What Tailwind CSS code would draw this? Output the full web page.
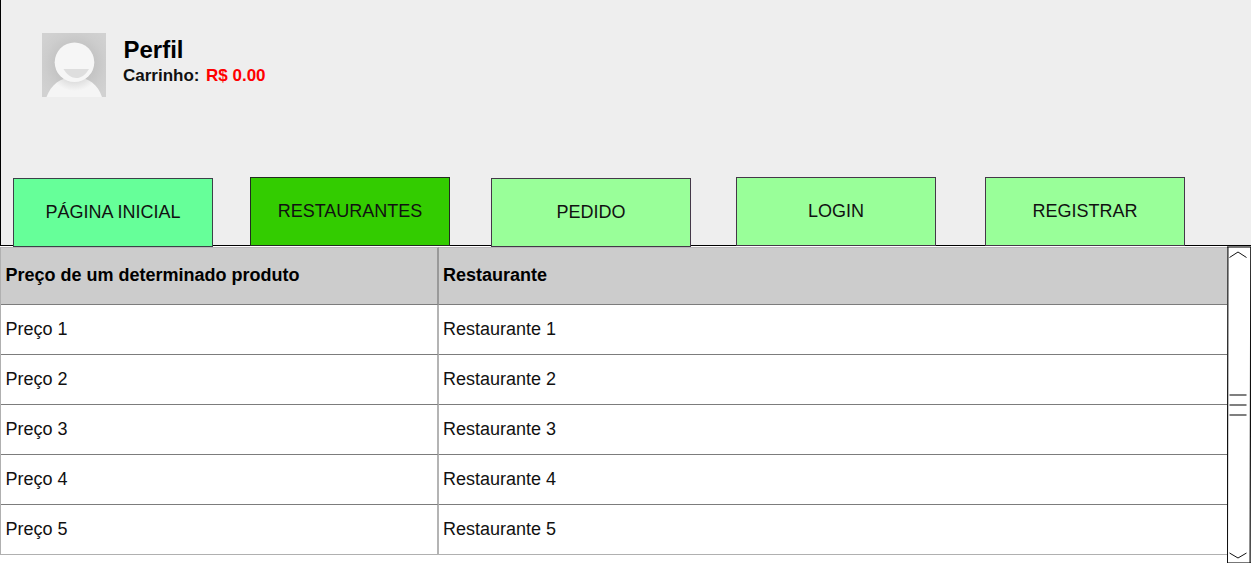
<!DOCTYPE html>
<html lang="pt-BR">
<head>
<meta charset="utf-8">
<title>Restaurantes</title>
<script src="https://cdn.jsdelivr.net/npm/@tailwindcss/browser@4"></script>
</head>
<body class="h-[563px] w-[1251px] overflow-hidden bg-white font-['Liberation_Sans',Arial,sans-serif] text-[18px] text-[#111]">
<header class="flex h-[246px] flex-col border-b border-l border-black bg-[#eeeeee]">
  <div class="flex h-[177px] shrink-0 pl-[41px] pt-[33px]">
    <svg class="size-16 shrink-0" viewBox="0 0 64 64">
      <defs>
        <radialGradient id="bg" gradientUnits="userSpaceOnUse" cx="33" cy="31" r="40"><stop offset=".45" stop-color="#c3c3c3"/><stop offset=".75" stop-color="#cdcdcd"/><stop offset="1" stop-color="#d1d1d1"/></radialGradient>
        <radialGradient id="sh" gradientUnits="userSpaceOnUse" cx="32.5" cy="31" r="27"><stop offset=".65" stop-color="#dedede"/><stop offset="1" stop-color="#f5f5f5"/></radialGradient>
      </defs>
      <path d="M0 0H64V64H0Z" fill="url(#bg)"/>
      <path d="M4.500 64C9 52 18 44 32.500 44S56 52 60 64Z" fill="url(#sh)"/>
      <circle cx="32.500" cy="29.300" r="19.800" fill="#f6f6f6"/>
      <path d="M21.500 36H47C43 42.500 39 45 34.300 45S25 42 21.500 36Z" fill="#dedede"/>
    </svg>
    <div class="pl-[17px] font-bold text-black">
      <h1 class="mt-[3px] h-[29px] pl-[0.5px] text-[24px] leading-[27px]">Perfil</h1>
      <p class="flex gap-[6.5px] text-[17px] leading-[22px]"><span class="text-[#111]">Carrinho:</span><span class="text-[#ff0000]">R$ 0.00</span></p>
    </div>
  </div>
  <nav class="flex shrink-0 pl-3 *:flex *:h-[69px] *:w-[200px] *:shrink-0 *:items-center *:justify-center *:border *:pb-px">
    <a class="mt-px border-[#3c4148] bg-[#66ff99]">PÁGINA INICIAL</a>
    <a class="ml-[37px] border-[#222b20] bg-[#33cc00]">RESTAURANTES</a>
    <a class="ml-[41px] mt-px border-[#443848] bg-[#99ff99]">PEDIDO</a>
    <a class="ml-[45px] border-[#443848] bg-[#99ff99]">LOGIN</a>
    <a class="ml-[49px] border-[#443848] bg-[#99ff99]">REGISTRAR</a>
  </nav>
</header>
<main class="flex h-[317px]">
  <div class="mt-px w-[1227px] shrink-0">
    <div class="grid grid-cols-[438px_788px] border-l border-[#b0b0b0] *:flex *:items-center *:border-b *:border-b-[#7c7c7c] *:pl-[4.5px] *:even:pl-[4px]">
      <div class="h-[58px] border-r-2 border-t border-t-[#b8b5b8] border-r-[#999999] bg-[#cccccc] pb-[2px] font-bold text-black">Preço de um determinado produto</div>
      <div class="h-[58px] border-t border-t-[#b8b5b8] bg-[#cccccc] pb-[2px] font-bold text-black">Restaurante</div>
      <div class="h-[50px] border-r-2 border-r-[#b4b4b4]">Preço 1</div><div>Restaurante 1</div>
      <div class="h-[50px] border-r-2 border-r-[#b4b4b4]">Preço 2</div><div>Restaurante 2</div>
      <div class="h-[50px] border-r-2 border-r-[#b4b4b4]">Preço 3</div><div>Restaurante 3</div>
      <div class="h-[50px] border-r-2 border-r-[#b4b4b4]">Preço 4</div><div>Restaurante 4</div>
      <div class="h-[50px] border-r-2 border-r-[#b4b4b4] border-b-[#b0b0b0]!">Preço 5</div><div class="border-b-[#b0b0b0]!">Restaurante 5</div>
    </div>
  </div>
  <svg class="h-[317px] w-6 shrink-0" viewBox="0 0 24 317" fill="none" stroke="#111" stroke-width="1">
    <path fill="#fff" stroke="none" d="M0 0H24V317H0Z"/>
    <path stroke="#777" stroke-width="2" d="M0 1H24M0 317H24"/>
    <path stroke-width="1.200" d="M.9 1L.4 317M23.800 1L23.100 317"/>
    <path d="M2.500 11.500L11 6L19.500 11.500M2.500 307L11 312L19.500 307"/>
    <path stroke="#555" stroke-width="1.300" d="M2.500 149H19.500M2.500 159H19.500M2.500 169H19.500"/>
  </svg>
</main>
</body>
</html>
